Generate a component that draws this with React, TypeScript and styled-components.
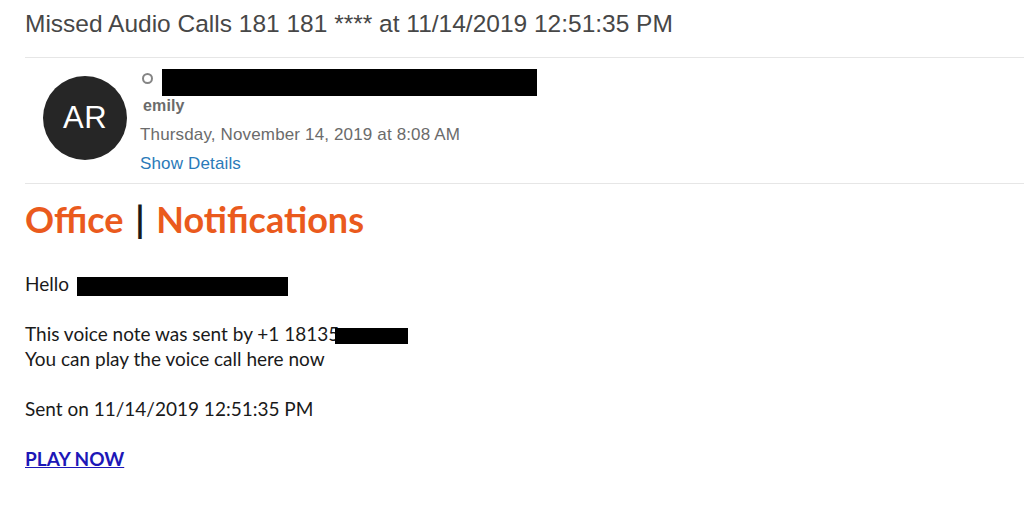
import React from "react";
import styled, { createGlobalStyle } from "styled-components";

const GlobalStyle = createGlobalStyle`
  body {
    margin: 0;
    background: #fff;
    font-family: "Liberation Sans", Arial, sans-serif;
  }
`;

const Page = styled.div`
  padding-left: 25px;
  width: 999px;
`;

const Subject = styled.h1`
  margin: 0;
  height: 58px;
  padding-top: 9px;
  box-sizing: border-box;
  font-size: 24.5px;
  line-height: 30px;
  font-weight: normal;
  color: #474747;
  border-bottom: 1px solid #e6e6e6;
`;

const Header = styled.div`
  display: flex;
  align-items: flex-start;
  height: 126px;
  padding-top: 11px;
  box-sizing: border-box;
  border-bottom: 1px solid #e6e6e6;
`;

const Avatar = styled.div`
  width: 84px;
  height: 84px;
  margin: 7px 13px 0 18px;
  border-radius: 50%;
  background: #262626;
  color: #fff;
  display: flex;
  align-items: center;
  justify-content: center;
  font-size: 31px;
  letter-spacing: 0.5px;
`;

const Meta = styled.div`
  display: flex;
  flex-direction: column;
  align-items: flex-start;
  font-size: 17px;
  letter-spacing: 0.15px;
  line-height: 22px;
  color: #6b6b6b;
`;

const FromRow = styled.div`
  display: flex;
  align-items: center;
  height: 27px;
`;

const Status = styled.span`
  flex: none;
  width: 7px;
  height: 7px;
  border: 2.5px solid #858585;
  border-radius: 50%;
  margin-left: 2px;
  margin-right: 9px;
  margin-bottom: 9px;
`;

const Redact = styled.span<{ $w: number; $h: number; $shift?: number }>`
  display: inline-block;
  width: ${(p) => p.$w}px;
  height: ${(p) => p.$h}px;
  margin-left: ${(p) => p.$shift ?? 0}px;
  background: #000;
  vertical-align: middle;
`;

const Name = styled.div`
  font-weight: bold;
  font-size: 16px;
  margin: -1px 0 0 3px;
`;

const DateLine = styled.div`
  margin-top: 7px;
`;

const DetailsLink = styled.a`
  margin-top: 7px;
  color: #2a7ab9;
  text-decoration: none;
`;

const Body = styled.div`
  font-family: "Lato", "Open Sans", sans-serif;
  font-size: 19px;
  color: #1a1a1a;
  padding-top: 13px;
`;

const Brand = styled.div`
  font-size: 36px;
  font-weight: bold;
  color: #ea5a1d;
  line-height: 44px;
  margin-bottom: 30px;
  word-spacing: 3px;
`;

const Bar = styled.span`
  color: #1a1a1a;
`;

const Para = styled.p`
  margin: 0 0 25px;
  line-height: 25px;
`;

const PlayLink = styled.a`
  font-weight: bold;
  color: #1d17b7;
  text-decoration: underline;
`;

export default function App() {
  return (
    <>
      <GlobalStyle />
      <Page>
        <Subject>Missed Audio Calls 181 181 **** at 11/14/2019 12:51:35 PM</Subject>
        <Header>
          <Avatar>AR</Avatar>
          <Meta>
            <FromRow>
              <Status />
              <Redact $w={375} $h={27} />
            </FromRow>
            <Name>emily</Name>
            <DateLine>Thursday, November 14, 2019 at 8:08 AM</DateLine>
            <DetailsLink href="#">Show Details</DetailsLink>
          </Meta>
        </Header>
        <Body>
          <Brand>
            Office <Bar>|</Bar> Notifications
          </Brand>
          <Para>
            Hello <Redact $w={211} $h={19} $shift={3} />
          </Para>
          <Para>
            This voice note was sent by +1 18135<Redact $w={73} $h={16} $shift={-4} />
            <br />
            You can play the voice call here now
          </Para>
          <Para>Sent on 11/14/2019 12:51:35 PM</Para>
          <Para>
            <PlayLink href="#">PLAY NOW</PlayLink>
          </Para>
        </Body>
      </Page>
    </>
  );
}
